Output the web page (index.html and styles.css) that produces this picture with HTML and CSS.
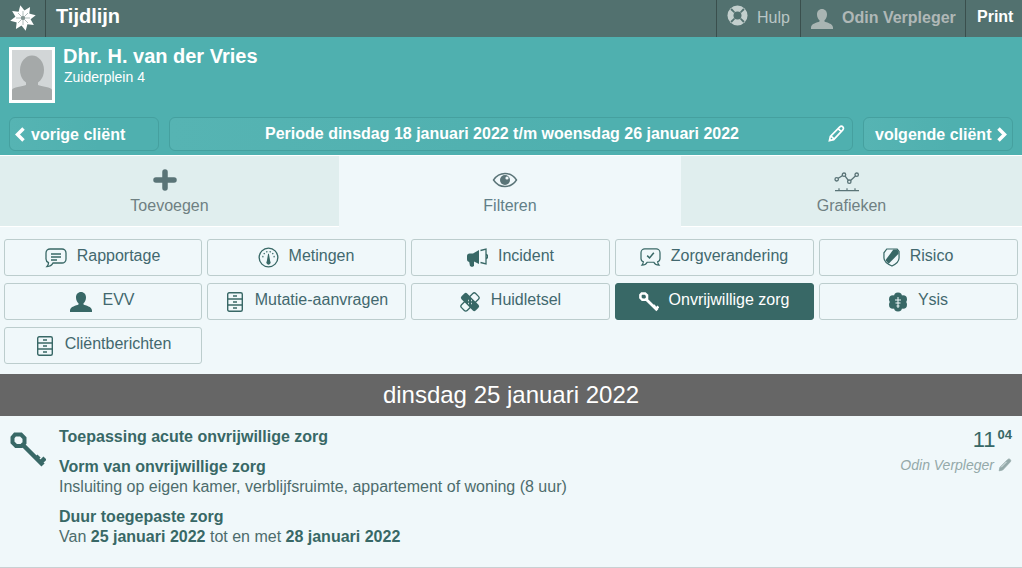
FILE: index.html
```html
<!DOCTYPE html>
<html lang="nl">
<head>
<meta charset="utf-8">
<title>Tijdlijn</title>
<link rel="stylesheet" href="styles.css">
</head>
<body>
<header class="topbar">
  <div class="logo">
    <svg viewBox="0 0 26 26" width="26" height="26">
      <g fill="#fff">
        <path d="M13 0l4 8-4 5-4-5z" transform="rotate(-12 13 13)"/>
        <path d="M13 0l4 8-4 5-4-5z" transform="rotate(33 13 13)"/>
        <path d="M13 0l4 8-4 5-4-5z" transform="rotate(78 13 13)"/>
        <path d="M13 0l4 8-4 5-4-5z" transform="rotate(123 13 13)"/>
        <path d="M13 0l4 8-4 5-4-5z" transform="rotate(168 13 13)"/>
        <path d="M13 0l4 8-4 5-4-5z" transform="rotate(213 13 13)"/>
        <path d="M13 0l4 8-4 5-4-5z" transform="rotate(258 13 13)"/>
        <path d="M13 0l4 8-4 5-4-5z" transform="rotate(303 13 13)"/>
      </g>
      <circle cx="13" cy="13" r="1.800" fill="#3a4f4d"/>
      <path d="M8 8l10 10M18 8L8 18M13 6v14M6 13h14" stroke="#8ea09e" stroke-width=".7"/>
    </svg>
  </div>
  <div class="title">Tijdlijn</div>
  <div class="top-item top-help">
    <svg viewBox="0 0 22 22" width="21" height="21"><circle cx="11" cy="11" r="10.500" fill="#c3cfcd"/><circle cx="11" cy="11" r="4.200" fill="#52716f"/><path d="M3.500 5l3.800 3.500 1.200-1.200L5 3.500zM18.500 5l-3.800 3.500-1.200-1.200L17 3.500zM3.500 17l3.800-3.500 1.200 1.200L5 18.500zM18.500 17l-3.800-3.500-1.200 1.200 3.500 3.800z" fill="#52716f"/></svg>
    <span>Hulp</span>
  </div>
  <div class="top-item top-user">
    <svg viewBox="0 0 22 20" width="22" height="20"><path d="M11 0c3 0 5 2.300 5 5.500 0 2.500-1 4.500-2.500 5.700v1.300c2 1 8.500 2 8.500 6V20H0v-1.500c0-4 6.500-5 8.500-6v-1.300C7 10 6 8 6 5.500 6 2.300 8 0 11 0z" fill="#a9b5b3"/></svg>
    <span>Odin Verpleger</span>
  </div>
  <div class="top-item top-print">Print</div>
</header>

<section class="client">
  <div class="client-info">
    <div class="avatar">
      <svg viewBox="0 0 40 50" width="40" height="50"><rect width="40" height="50" fill="#d2d6d7"/><ellipse cx="20" cy="20" rx="12" ry="14.500" fill="#a5a9a9"/><path d="M14 30h12v5c3 1.500 14 2 14 5v10H0V40c0-3 11-3.500 14-5z" fill="#a5a9a9"/></svg>
    </div>
    <div>
      <div class="client-name">Dhr. H. van der Vries</div>
      <div class="client-addr">Zuiderplein 4</div>
    </div>
  </div>
  <nav class="client-nav">
    <div class="nav-btn nav-prev">
      <svg viewBox="0 0 12 15" width="12" height="15"><path d="M9.500 1.500L3.500 7.500l6 6" fill="none" stroke="#fff" stroke-width="3.500"/></svg>
      <span>vorige cliënt</span>
    </div>
    <div class="nav-btn nav-period">
      <span>Periode dinsdag 18 januari 2022 t/m woensdag 26 januari 2022</span>
      <svg class="pencil" viewBox="0 0 18 18" width="17" height="17"><path d="M1.500 16.500l1-4.500L12.500 2c1-1 2.300-1 3.200 0 .9.900.9 2.200 0 3.100L6 15.500zM3.500 12l2.500 2.500M11 4l3 3" fill="none" stroke="#fff" stroke-width="1.800"/></svg>
    </div>
    <div class="nav-btn nav-next">
      <span>volgende cliënt</span>
      <svg viewBox="0 0 12 15" width="12" height="15"><path d="M2.500 1.500l6 6-6 6" fill="none" stroke="#fff" stroke-width="3.500"/></svg>
    </div>
  </nav>
</section>

<div class="tabs">
  <div class="tab">
    <svg viewBox="0 0 26 24" width="26" height="24"><path d="M13 4v16M4 12h18" stroke="#5a7477" stroke-width="5.500" stroke-linecap="round"/></svg>
    <span>Toevoegen</span>
  </div>
  <div class="tab tab-active">
    <svg viewBox="0 0 26 24" width="26" height="24"><path d="M1.500 12c3-4.500 6.500-6.500 11.500-6.500S21.500 7.500 24.500 12c-3 4.500-6.500 6.500-11.500 6.500S4.500 16.500 1.500 12z" fill="none" stroke="#5a7477" stroke-width="1.400"/><circle cx="13" cy="12" r="5" fill="#5a7477"/><circle cx="15" cy="10" r="1.600" fill="#f0f8fa"/></svg>
    <span>Filteren</span>
  </div>
  <div class="tab">
    <svg viewBox="0 0 26 24" width="26" height="24"><g fill="none" stroke="#5a7477" stroke-width="1.300"><path d="M2.700 11.300L10 6.700l5.300 7 7.400-7"/><circle cx="2.700" cy="11.300" r="1.700" fill="#e0eeee"/><circle cx="10" cy="6.700" r="1.700" fill="#e0eeee"/><circle cx="15.300" cy="13.700" r="1.700" fill="#e0eeee"/><circle cx="22.700" cy="6.700" r="1.700" fill="#e0eeee"/></g><path d="M1 22.700h24M5 20.300v2M13 20.300v2M21 20.300v2" stroke="#5a7477" stroke-width="1.200"/></svg>
    <span>Grafieken</span>
  </div>
</div>

<div class="filters">
  <div class="filter">
    <svg viewBox="0 0 22 20" width="22" height="20"><path d="M5 1h12c2 0 4 1.500 4 4v6c0 2.500-2 4-4 4H8c-1 2-3 3.500-6 3.500 1-1 1.500-2.500 1.500-3.800C2 14 1 12.800 1 11V5c0-2.500 2-4 4-4zM6 6h10M6 9h10M6 12h6" fill="none" stroke="#386866" stroke-width="1.300"/></svg>
    <span>Rapportage</span>
  </div>
  <div class="filter">
    <svg viewBox="0 0 22 22" width="21" height="21"><circle cx="11" cy="11" r="9.800" fill="none" stroke="#386866" stroke-width="1.400"/><path d="M10.600 7h.8l1.400 8a2.200 2.200 0 1 1-3.600 0z" fill="#386866"/><path d="M4.500 10l1.200.2M6 6.500l1 .8M9 4.500l.3 1.200M13 4.500l-.3 1.200M16 6.500l-1 .8M17.500 10l-1.200.2" stroke="#386866" stroke-width="1.500"/></svg>
    <span>Metingen</span>
  </div>
  <div class="filter">
    <svg viewBox="0 0 22 20" width="22" height="20"><path d="M1 8c0-1.500 1-2.500 2.500-2.500H7L13 2v14l-5-2.500v4.500l-2 1-2-1-.8-4C1.500 13.500 1 12.500 1 11z" fill="#386866"/><path d="M14.500 2.500L20 1v15l-5.500-1.500M20 6l1.500 1.500v2L20 11" fill="none" stroke="#386866" stroke-width="1.300"/></svg>
    <span>Incident</span>
  </div>
  <div class="filter">
    <svg viewBox="0 0 22 20" width="21" height="19"><path d="M5 1h12c2 0 4 1.500 4 4v6c0 2-1 3-2.500 3.500.2 1.300.7 2.500 1.500 3.500-2.500 0-4.500-1-5.500-3H7.500c-1 2-3 3-5.500 3 .8-1 1.300-2.200 1.500-3.500C2 14 1 13 1 11V5c0-2.500 2-4 4-4z" fill="none" stroke="#386866" stroke-width="1.300"/><path d="M7.500 8l2.500 2.500L14.500 5" fill="none" stroke="#386866" stroke-width="1.600"/></svg>
    <span>Zorgverandering</span>
  </div>
  <div class="filter">
    <svg viewBox="0 0 18 20" width="17" height="19"><path d="M4 1h11l2 2.500v7c0 4-3.500 6.500-7.500 8.500C5 17 1 14.500 1 10.500V5z" fill="#f0f8fa" stroke="#386866" stroke-width="1.300"/><path d="M11 1.500h4l1.500 2.500v2L6 16.500 2.500 13z" fill="#386866"/></svg>
    <span>Risico</span>
  </div>

  <div class="filter">
    <svg viewBox="0 0 22 20" width="22" height="20"><path d="M11 0c3 0 5 2.300 5 5.500 0 2.500-1 4.500-2.500 5.700v1.300c2 1 8.500 2 8.500 6V20H0v-1.500c0-4 6.500-5 8.500-6v-1.300C7 10 6 8 6 5.500 6 2.300 8 0 11 0z" fill="#386866"/></svg>
    <span>EVV</span>
  </div>
  <div class="filter filter-list">
    <svg viewBox="0 0 16 20" width="16" height="20"><rect x=".7" y=".7" width="14.600" height="18.600" rx="1.500" fill="none" stroke="#386866" stroke-width="1.400"/><path d="M1 7h14M1 13h14M6 4h4M6 10h4M6 16h4" stroke="#386866" stroke-width="1.300"/></svg>
    <span>Mutatie-aanvragen</span>
  </div>
  <div class="filter">
    <svg viewBox="0 0 22 20" width="22" height="20"><g transform="rotate(-45 11 10)"><rect x="1" y="6" width="20" height="8" rx="2" fill="#f0f8fa" stroke="#386866" stroke-width="1.300"/></g><g transform="rotate(45 11 10)"><rect x="1" y="6" width="20" height="8" rx="2" fill="#386866"/></g><path d="M9 8.500h.8M12 8.500h.8M9 11.500h.8M12 11.500h.8" stroke="#f0f8fa" stroke-width="1.300"/></svg>
    <span>Huidletsel</span>
  </div>
  <div class="filter filter-on">
    <svg viewBox="0 0 36 36" width="20" height="20"><path d="M5 2.500h6l3.500 3.500v5l-3 3H6l-3.500-3.500v-5z" fill="none" stroke="#fff" stroke-width="4.500"/><path d="M12 12l21 21M30 31l5-5M26 27l3-3" stroke="#fff" stroke-width="5" fill="none"/></svg>
    <span>Onvrijwillige zorg</span>
  </div>
  <div class="filter">
    <svg viewBox="0 0 20 20" width="20" height="20"><circle cx="10" cy="4.500" r="4" fill="#386866"/><circle cx="15" cy="7.300" r="4" fill="#386866"/><circle cx="15" cy="12.700" r="4" fill="#386866"/><circle cx="10" cy="15.500" r="4" fill="#386866"/><circle cx="5" cy="12.700" r="4" fill="#386866"/><circle cx="5" cy="7.300" r="4" fill="#386866"/><circle cx="10" cy="10" r="5" fill="#386866"/><path d="M7 8h6M7.500 11h5M8.500 14h3M10 5v11" stroke="#f0f8fa" stroke-width="1"/></svg>
    <span>Ysis</span>
  </div>

  <div class="filter filter-list">
    <svg viewBox="0 0 16 20" width="16" height="20"><rect x=".7" y=".7" width="14.600" height="18.600" rx="1.500" fill="none" stroke="#386866" stroke-width="1.400"/><path d="M1 7h14M1 13h14M6 4h4M6 10h4M6 16h4" stroke="#386866" stroke-width="1.300"/></svg>
    <span>Cliëntberichten</span>
  </div>
</div>

<div class="day">dinsdag 25 januari 2022</div>

<article class="entry">
  <svg class="entry-icon" viewBox="0 0 36 36" width="36" height="36"><path d="M5 2.500h6l3.500 3.500v5l-3 3H6l-3.500-3.500v-5z" fill="none" stroke="#386866" stroke-width="4"/><path d="M12 12l21 21M30 31l5-5M26 27l3-3" stroke="#386866" stroke-width="4.500" fill="none"/></svg>
  <div class="entry-body">
    <div class="entry-title">Toepassing acute onvrijwillige zorg</div>
    <div class="field">
      <div class="field-label">Vorm van onvrijwillige zorg</div>
      <div>Insluiting op eigen kamer, verblijfsruimte, appartement of woning (8 uur)</div>
    </div>
    <div class="field">
      <div class="field-label">Duur toegepaste zorg</div>
      <div>Van <b>25 januari 2022</b> tot en met <b>28 januari 2022</b></div>
    </div>
  </div>
  <div class="entry-meta">
    <div class="time">11<sup>04</sup></div>
    <div class="author">Odin Verpleger
      <svg viewBox="0 0 18 18" width="14" height="14"><path d="M1.500 16.500l1-4.500L12.500 2c1-1 2.300-1 3.200 0 .9.900.9 2.200 0 3.100L6 15.500z" fill="#94a9a9" stroke="#94a9a9" stroke-width="1"/><path d="M4 12l7-7" stroke="#f0f8fa" stroke-width="1"/></svg>
    </div>
  </div>
</article>
</body>
</html>
```
FILE: styles.css
```css
* { box-sizing: border-box; }
html, body { margin: 0; padding: 0; }
body {
  width: 1022px;
  height: 568px;
  overflow: hidden;
  background: #f0f8fa;
  font-family: "Liberation Sans", Arial, sans-serif;
  font-size: 16px;
  color: #386866;
}
svg { display: block; flex: none; }

.topbar {
  display: flex;
  height: 37px;
  background: #52716f;
  color: #fff;
}
.logo {
  width: 46px;
  border-right: 1px solid #3a4f4d;
  display: flex;
  align-items: center;
  justify-content: center;
  padding-bottom: 1px;
}
.title {
  flex: 1;
  padding-left: 10px;
  font-size: 20px;
  font-weight: bold;
  line-height: 32px;
}
.top-item {
  display: flex;
  align-items: center;
  border-left: 1px solid #3a4f4d;
}
.top-help {
  width: 84px;
  padding-left: 10px;
  gap: 9px;
  color: #b9c6c5;
}
.top-help svg { margin-bottom: 6px; }
.top-user {
  width: 165px;
  padding-left: 10px;
  gap: 9px;
  color: #b0b8b7;
  font-weight: bold;
}
.top-print {
  width: 57px;
  padding-left: 11px;
  font-weight: bold;
  color: #fff;
  padding-bottom: 3px;
}
.top-help span, .top-user span { padding-bottom: 1px; }

.client {
  height: 118px;
  background: #4fb0af;
  color: #fff;
  padding: 10px 9px 0;
}
.client-info {
  display: flex;
  gap: 9px;
  height: 70px;
}
.avatar {
  width: 46px;
  height: 56px;
  border: 3px solid #fff;
  background: #d2d6d7;
  overflow: hidden;
}
.client-name {
  font-size: 20px;
  font-weight: bold;
  line-height: 21px;
  margin: -1px 0 0 -1px;
}
.client-addr {
  font-size: 14px;
  line-height: 20px;
}
.client-nav {
  display: flex;
  gap: 10px;
}
.nav-btn {
  height: 34px;
  border: 1px solid #45a09f;
  border-radius: 6px;
  background: linear-gradient(90deg, #56b4b3, #4fb0af 60%);
  display: flex;
  align-items: center;
  font-weight: bold;
  position: relative;
}
.nav-prev, .nav-next {
  width: 150px;
  gap: 5px;
  padding-top: 1px;
}
.nav-prev { padding-left: 4px; }
.nav-next { padding-left: 11px; }
.nav-period {
  flex: 1;
  justify-content: center;
  padding-right: 18px;
}
.pencil {
  position: absolute;
  right: 7px;
  top: 7px;
}

.tabs {
  display: flex;
  height: 72px;
  border-top: 1px solid #fff;
}
.tab {
  flex: 1;
  background: #e0eeee;
  display: flex;
  flex-direction: column;
  align-items: center;
  padding-top: 12px;
  color: #6f8082;
  gap: 4px;
  border-bottom: 1px solid #fff;
}
.tab svg { margin-right: 10px; }
.tab span { line-height: 20px; }
.tab:nth-child(1) { flex: 0 0 339px; }
.tab:nth-child(3) { flex: 0 0 341px; }
.tab-active {
  background: #f0f8fa;
  color: #627f88;
  border-bottom-color: #f0f8fa;
}

.filters {
  display: grid;
  grid-template-columns: 198px repeat(4, 199px);
  grid-auto-rows: 37px;
  align-content: start;
  column-gap: 5px;
  row-gap: 7px;
  padding: 12px 0 0 4px;
  height: 147px;
}
.filter {
  border: 1px solid #bccdcd;
  border-radius: 3px;
  display: flex;
  align-items: center;
  justify-content: center;
  gap: 10px;
  color: #42686e;
  padding: 0 1px 4px 0;
}
.filter svg { margin-top: 4px; }
.filter-list { padding-left: 2px; padding-right: 0; }
.filter-list svg { margin-right: 2px; }
.filter-on {
  background: #386866;
  color: #fff;
  border-color: #386866;
}

.day {
  height: 42px;
  background: #666;
  color: #fff;
  text-align: center;
  font-size: 24px;
  line-height: 42px;
}

.entry {
  display: flex;
  height: 152px;
  border-bottom: 1px solid #c8d0d2;
  padding: 11px 10px 0;
  color: #4d6c6c;
}
.entry-icon { margin: 5px 13px 0 0; }
.entry-body { flex: 1; }
.entry-title, .field-label, .entry-body b {
  font-weight: bold;
  color: #386866;
}
.entry-title { line-height: 20px; }
.field { margin-top: 10px; line-height: 20px; }
.entry-meta { text-align: right; }
.time {
  font-size: 22px;
  line-height: 26px;
  color: #386866;
}
.time sup {
  font-size: 13px;
  font-weight: bold;
  vertical-align: 8px;
  line-height: 0;
  margin-left: 2px;
}
.author {
  display: flex;
  justify-content: flex-end;
  align-items: center;
  gap: 4px;
  font-size: 14px;
  font-style: italic;
  color: #94a9a9;
  line-height: 20px;
  margin-top: 2px;
}
```
